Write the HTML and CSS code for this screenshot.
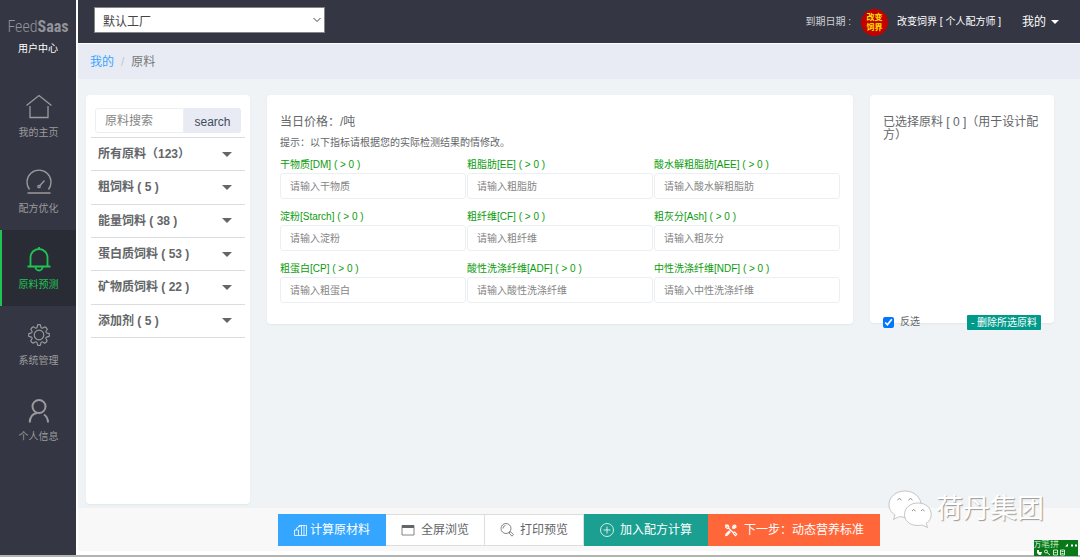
FILE: index.html
```html
<!DOCTYPE html>
<html lang="zh-CN">
<head>
<meta charset="utf-8">
<meta name="viewport" content="width=device-width, initial-scale=1">
<title>FeedSaas 用户中心</title>
<link rel="stylesheet" href="styles.css">
</head>
<body>
<div class="app">
  <aside class="sidebar">
    <div class="brand">
      <div class="brand-name">Feed<b>Saas</b></div>
      <div class="brand-sub">用户中心</div>
    </div>
    <nav class="nav">
      <a class="nav-item" href="#">
        <svg class="nav-icon" viewBox="0 0 28 28"><path d="M1.500 12.500 14 2.500l12.500 10M5 13v11.500h18V13"/></svg>
        <span>我的主页</span>
      </a>
      <a class="nav-item" href="#">
        <svg class="nav-icon" viewBox="0 0 28 28"><path d="M4.500 20.500a12 12 0 1 1 19 0M2.500 24h23M14.500 17l5-5.500"/><circle cx="14" cy="17.500" r="1.200"/></svg>
        <span>配方优化</span>
      </a>
      <a class="nav-item active" href="#">
        <svg class="nav-icon" viewBox="0 0 28 28"><g stroke-width="1.800"><path d="M14 2v2M5.500 21.500V12.500a8.500 8.500 0 0 1 17 0v9M2.500 21.500h23M10.500 22a3.500 3.500 0 0 0 7 0"/></g></svg>
        <span>原料预测</span>
      </a>
      <a class="nav-item" href="#">
        <svg class="nav-icon" viewBox="-2.800 -2.800 21.600 21.600"><g stroke-width="0.900"><circle cx="8" cy="8" r="3.700"/><path d="M9.400 1.700 9.100.2Q8-.2 6.900.2L6.600 1.700a1.100 1.100 0 0 1-1.700.8L3.600 1.600Q2.300 2.200 1.700 3.500l.8 1.400a1.100 1.100 0 0 1-.8 1.700L.2 6.900Q-.2 8 .2 9.100l1.500.3a1.100 1.100 0 0 1 .8 1.700l-.9 1.300q.6 1.300 1.900 1.900l1.400-.8a1.100 1.100 0 0 1 1.700.8l.3 1.500q1.100.4 2.200 0l.3-1.500a1.100 1.100 0 0 1 1.700-.8l1.300.9q1.300-.6 1.900-1.900l-.8-1.400a1.100 1.100 0 0 1 .8-1.700l1.500-.3q.4-1.100 0-2.200l-1.500-.3a1.100 1.100 0 0 1-.8-1.700l.9-1.300q-.6-1.300-1.900-1.900l-1.400.8a1.100 1.100 0 0 1-1.700-.8z"/></g></svg>
        <span>系统管理</span>
      </a>
      <a class="nav-item" href="#">
        <svg class="nav-icon" viewBox="0 0 28 28"><g stroke-width="2"><circle cx="14" cy="9.500" r="6.500"/><path d="M4.800 25.500c0-5 2.500-8.500 7-9.500M19 17.500c2.700 1.800 4 4.500 4 8"/></g></svg>
        <span>个人信息</span>
      </a>
    </nav>
  </aside>

  <div class="main">
    <header class="topbar">
      <div class="factory">
        <select class="factory-select" aria-label="工厂"><option>默认工厂</option></select>
        <svg class="factory-arrow" viewBox="0 0 10 10"><path d="M1.500 3 5 6.500 8.500 3"/></svg>
      </div>
      <div class="account">
        <span class="expiry">到期日期 :</span>
        <span class="avatar">改变<br>饲界</span>
        <span class="user">改变饲界 [ 个人配方师 ]</span>
        <button class="my-menu" type="button">我的 <i class="caret"></i></button>
      </div>
    </header>

    <nav class="crumbs" aria-label="breadcrumb"><a href="#">我的</a><span class="slash">/</span><span>原料</span></nav>

    <main class="content">
      <section class="card categories">
        <form class="search">
          <input class="search-input" type="text" placeholder="原料搜索" aria-label="原料搜索">
          <button class="search-button" type="button">search</button>
        </form>
        <div class="category-list">
          <button class="category" type="button">所有原料（123）<i class="caret"></i></button>
          <button class="category" type="button">粗饲料 ( 5 )<i class="caret"></i></button>
          <button class="category" type="button">能量饲料 ( 38 )<i class="caret"></i></button>
          <button class="category" type="button">蛋白质饲料 ( 53 )<i class="caret"></i></button>
          <button class="category" type="button">矿物质饲料 ( 22 )<i class="caret"></i></button>
          <button class="category" type="button">添加剂 ( 5 )<i class="caret"></i></button>
        </div>
      </section>

      <section class="card analysis">
        <h1 class="card-title">当日价格：/吨</h1>
        <p class="hint">提示：以下指标请根据您的实际检测结果酌情修改。</p>
        <form class="fields">
          <label class="field">干物质[DM] ( &gt; 0 )<input type="text" placeholder="请输入干物质"></label>
          <label class="field">粗脂肪[EE] ( &gt; 0 )<input type="text" placeholder="请输入粗脂肪"></label>
          <label class="field">酸水解粗脂肪[AEE] ( &gt; 0 )<input type="text" placeholder="请输入酸水解粗脂肪"></label>
          <label class="field">淀粉[Starch] ( &gt; 0 )<input type="text" placeholder="请输入淀粉"></label>
          <label class="field">粗纤维[CF] ( &gt; 0 )<input type="text" placeholder="请输入粗纤维"></label>
          <label class="field">粗灰分[Ash] ( &gt; 0 )<input type="text" placeholder="请输入粗灰分"></label>
          <label class="field">粗蛋白[CP] ( &gt; 0 )<input type="text" placeholder="请输入粗蛋白"></label>
          <label class="field">酸性洗涤纤维[ADF] ( &gt; 0 )<input type="text" placeholder="请输入酸性洗涤纤维"></label>
          <label class="field">中性洗涤纤维[NDF] ( &gt; 0 )<input type="text" placeholder="请输入中性洗涤纤维"></label>
        </form>
      </section>

      <section class="card selected">
        <h2 class="card-title">已选择原料 [ 0 ]（用于设计配方）</h2>
        <div class="selected-actions">
          <label class="invert"><input type="checkbox" checked>反选</label>
          <button class="delete" type="button">- 删除所选原料</button>
        </div>
      </section>
    </main>

    <footer class="actions">
      <div class="button-group">
        <button class="action primary" type="button"><svg viewBox="0 0 14 14"><path d="M.5 7h4v5.500h-4zM2.500 7V5l5-2.500v10h-3M5 4V2.500h7.500v10H7.500M10 2.500v10"/></svg>计算原材料</button>
        <button class="action plain" type="button"><svg class="gap" viewBox="0 0 14 14"><path d="M1 2.500h12v9.500H1z"/><path class="solid" d="M1 2h12v3H1z"/></svg>全屏浏览</button>
        <button class="action plain" type="button"><svg class="gap" viewBox="0 0 14 14"><circle cx="6" cy="5.500" r="5"/><path d="M3 5.500a3 3 0 0 1 2.500-3M9.500 9l1-.3 3 3-1.500 1.500-2.800-3z"/></svg>打印预览</button>
        <button class="action teal" type="button"><svg class="gap" viewBox="0 0 14 14"><circle cx="7" cy="7" r="6.500"/><path d="M7 3.500v7M3.500 7h7"/></svg>加入配方计算</button>
        <button class="action orange" type="button"><svg class="gap" viewBox="0 0 14 14"><g stroke-width="1.100"><path d="m4.500 5 5 5M1.700 2.500v2l2 1 1.300-1.300-.8-2-1.700-.2 1.300 1.500zM9.500 9.500l1-.5 2.300 2.300-1.300 1.300-2.300-2.300zM12 2 9 5M10.500 1.700 8.500 3.700l.3 1.500 1.500.3 2.200-2M7 7l-4.500 4.500M5.200 8 2 11l-.3 1.500 1.500-.2 3-3.200"/></g></svg>下一步：动态营养标准</button>
      </div>
    </footer>
  </div>
</div>

<div class="watermark">
  <svg class="wechat" viewBox="0 0 44 38"><path d="M17 1C8 1 1 7 1 14.500c0 4.500 2 8 6 10.500l-1.500 4.500 6-3 5.500 1c9 0 16-6 16-13S26 1 17 1z"/><path d="M30 13c-8 0-13.500 5-13.500 11.500S22 35.500 30 35.500l4-.5 5.500 2.500-1.300-4c3-2 5-5 5-9C43.200 18 38 13 30 13z"/><path class="eyes" d="M9.500 10q2-3 4 0M20.500 10q2-3 4 0M24 21q1.500-3 3.500 0M33 21q1.500-3 3.500 0"/></svg>
  <span>荷丹集团</span>
</div>
<div class="ime">
  <div class="ime-row"><span>万</span><span class="ime-mode">笔拼</span><svg viewBox="0 0 14 6"><path d="M1 4.500h3V1.500zM7 2.500h2v2H7zM11 2.500h2v2h-2z"/></svg></div>
  <svg class="ime-tools" viewBox="0 0 44 7"><path class="solid" d="M3 1h2v2h3l-1 3H5L3 4z"/><circle cx="12" cy="2.500" r="1.500"/><path d="m13 3.500 3 2.500M19.500 1h4v5h-4zM20.500 3.500h2M26.500 1h4v5h-4zM27.500 2.500h2M27.500 4.500h2"/></svg>
</div>
</body>
</html>
```
FILE: styles.css
```css
* { box-sizing: border-box; }

body {
  margin: 0;
  font-family: "Liberation Sans", "Noto Sans CJK SC", sans-serif;
  font-size: 12px;
  line-height: 16px;
  color: #636668;
  background: #fff;
}

button, input, select { font: inherit; color: inherit; margin: 0; }
button { border: 0; background: none; padding: 0; cursor: pointer; }
a { color: inherit; text-decoration: none; }
h1, h2, p { margin: 0; font-weight: 400; }
svg { fill: none; stroke: currentColor; flex: none; }
.solid { fill: currentColor; stroke: none; }

.app {
  display: flex;
  gap: 2px;
  min-height: 100vh;
  border-bottom: 2px solid #b0b5b0;
}

/* Sidebar */
.sidebar { width: 76px; flex: none; background: #343643; color: #9b9b9c; }
.brand { height: 78px; padding-top: 16px; text-align: center; }
.brand-name {
  font-family: "Roboto Condensed", "Liberation Sans Narrow", Roboto, sans-serif;
  font-size: 16px;
  font-weight: 300;
  line-height: 22px;
  color: #92939b;
}
.brand-name b { font-weight: 700; }
.brand-sub { font-size: 10px; line-height: 21px; color: #fff; }
.nav-item {
  display: flex;
  flex-direction: column;
  align-items: center;
  gap: 4px;
  height: 76px;
  padding-top: 15px;
  border-left: 2px solid transparent;
  padding-right: 1px;
  font-size: 10px;
}
.nav-icon { width: 28px; height: 28px; stroke-width: 1.3; }
.nav-item.active { background: #2a2c35; border-color: #1fc455; color: #1fc455; }

/* Header */
.main { flex: 1; min-width: 0; display: flex; flex-direction: column; padding-bottom: 4px; }
.topbar {
  display: flex;
  justify-content: space-between;
  align-items: flex-start;
  height: 43px;
  padding: 7px 21px 0 16px;
  background: #343643;
  color: #fff;
}
.factory { position: relative; width: 231px; }
.factory-select {
  display: block;
  width: 100%;
  height: 26px;
  padding: 3px 8px 0;
  border: 1px solid #858585;
  border-radius: 0;
  appearance: none;
  background: #fff;
  color: #444;
}
.factory-arrow { position: absolute; right: 3px; top: 8px; width: 10px; height: 10px; color: #444; pointer-events: none; }
.account { display: flex; align-items: center; height: 30px; font-size: 10px; }
.expiry { color: #d0d0d4; margin-right: 10px; }
.avatar {
  width: 27px;
  height: 27px;
  padding-top: 4px;
  margin-right: 9px;
  border-radius: 50%;
  background: #c30000;
  color: #ffe600;
  font-size: 8px;
  font-weight: 700;
  line-height: 10px;
  text-align: center;
}
.user { margin-right: 21px; }
.my-menu { display: flex; align-items: center; gap: 5px; font-size: 12px; }
.caret { border: 5px solid transparent; border-top-color: currentColor; border-bottom: 0; }
.my-menu .caret { border-width: 4px; border-bottom: 0; }

.crumbs {
  display: flex;
  align-items: center;
  height: 35px;
  margin-top: 1px;
  padding-left: 12px;
  background: #e8ebf3;
  color: #777;
}
.crumbs a { color: #36a5fb; }
.slash { padding: 0 7px; color: #c4c6cc; }

/* Cards */
.content {
  flex: 1;
  display: grid;
  grid-template-columns: 164px minmax(0, 1fr) 184px;
  gap: 17px;
  padding: 16px 26px 4px 8px;
  align-items: start;
  background: #eff3f6;
}
.card { background: #fff; border-radius: 4px; box-shadow: 0 1px 2px #e2e7ea; }
.card-title { font-size: 12px; line-height: 13px; }

.categories { align-self: stretch; padding: 13px 5px; }
.search { display: flex; padding: 0 4px 4px; }
.search-input {
  flex: 1;
  min-width: 0;
  height: 25px;
  padding: 0 9px;
  border: 1px solid #eceff2;
  border-radius: 3px 0 0 3px;
}
input::placeholder { color: #858585; opacity: 1; }
.search-button {
  width: 57px;
  height: 25px;
  padding-top: 2px;
  border-radius: 0 3px 3px 0;
  background: #e8ebf3;
  color: #3f4d60;
  font-size: 12px;
}
.category-list { display: grid; grid-auto-rows: 1fr; height: 201px; border-top: 1px solid #dcdddf; }
.category {
  display: flex;
  align-items: center;
  justify-content: space-between;
  padding: 0 13px 0 7px;
  border-bottom: 1px solid #dcdddf;
  font-weight: 700;
  text-align: left;
}

.analysis { padding: 21px 13px; min-height: 228px; }
.hint { margin-top: 5px; font-size: 10px; line-height: 18px; }
.fields { display: grid; grid-template-columns: repeat(3, 1fr); gap: 9px 1px; margin-top: 4px; }
.field { display: flex; flex-direction: column; font-size: 10px; line-height: 17px; color: #0a9b0a; }
.field input {
  height: 26px;
  padding: 0 9px;
  border: 1px solid #eceff2;
  border-radius: 3px;
  color: #555;
  min-width: 0;
}

.selected {
  display: flex;
  flex-direction: column;
  justify-content: space-between;
  height: 228px;
  padding: 21px 13px 0;
}
.selected-actions { display: flex; justify-content: space-between; align-items: center; margin-bottom: -7px; }
.invert { display: flex; align-items: center; gap: 6px; font-size: 10px; }
.invert input { width: 11px; height: 11px; }
.delete { height: 15px; padding: 0 4px; border-radius: 1px; background: #009a8a; color: #fff; font-size: 10px; line-height: 15px; }

/* Bottom toolbar */
.actions { display: flex; justify-content: center; padding: 6px 0 5px; background: #f8f8f8; }
.button-group { display: flex; }
.action {
  display: flex;
  align-items: center;
  justify-content: center;
  gap: 2px;
  height: 32px;
  padding: 0 15px;
  border: 1px solid transparent;
}
.action svg { width: 14px; height: 14px; stroke-width: 0.8; }
.action .gap { margin-right: 4px; }
.primary { background: #35a6ff; color: #fff; }
.plain { background: #fff; border-color: #ddd; border-left-width: 0; }
.teal { background: #1b9f91; color: #fff; }
.orange { background: #ff673a; color: #fff; }

/* Floating overlays */
.watermark {
  position: absolute;
  right: 36px;
  bottom: 28px;
  display: flex;
  align-items: center;
  gap: 4px;
  color: #fff;
  font-size: 27px;
  line-height: 40px;
  text-shadow: 1px 1px 1px #999;
  pointer-events: none;
}
.wechat { width: 44px; height: 38px; fill: #fff; stroke: #b5b8ba; stroke-width: 0.8; }
.wechat .eyes { fill: none; stroke: #8c8c8c; stroke-width: 1; }
.ime {
  position: absolute;
  right: 2px;
  bottom: 1px;
  width: 44px;
  height: 16px;
  overflow: hidden;
  background: #087818;
  color: #fff;
}
.ime-row { display: flex; align-items: center; height: 9px; font-size: 7px; line-height: 9px; }
.ime-mode { font-size: 9px; color: #b9e3bd; }
.ime-row svg { width: 14px; height: 6px; margin-left: auto; fill: #fff; stroke: none; }
.ime-tools { display: block; width: 44px; height: 7px; stroke-width: 0.8; }
```
